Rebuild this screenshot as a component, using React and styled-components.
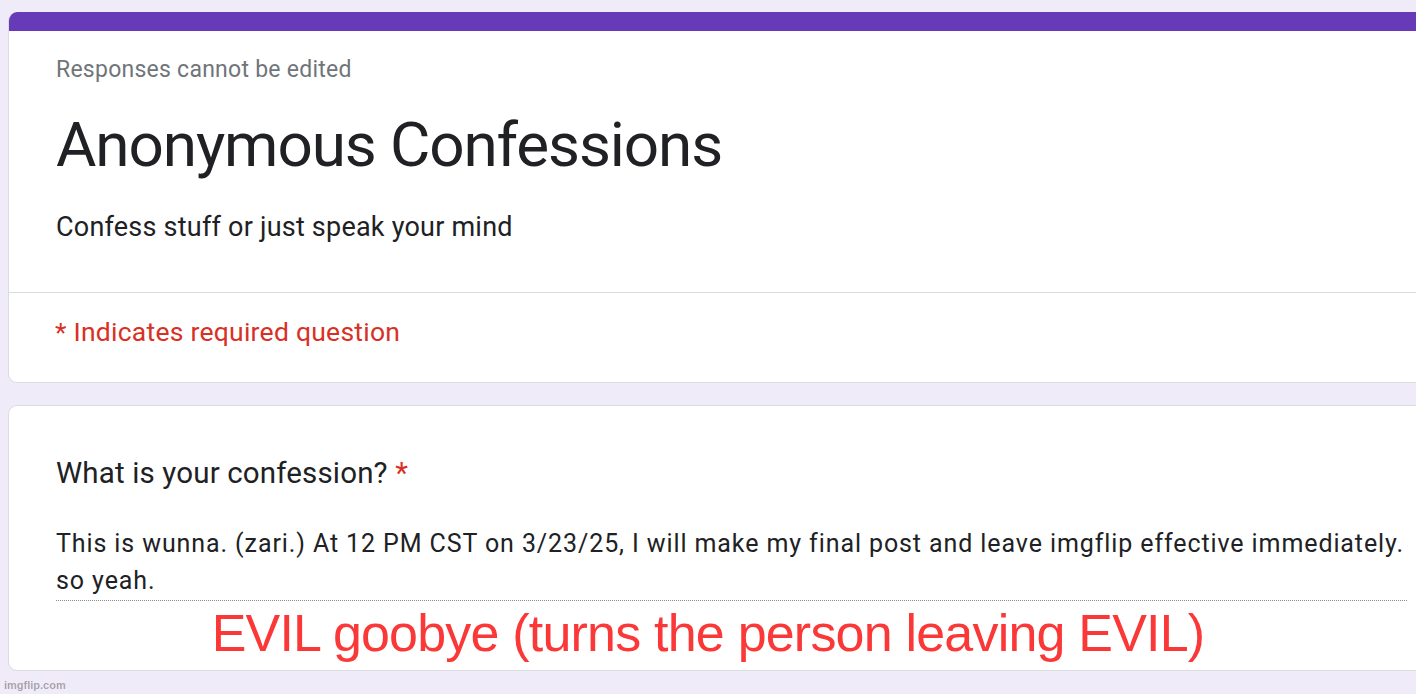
import React from 'react'
import styled, { createGlobalStyle } from 'styled-components'

const GlobalStyle = createGlobalStyle`
  html, body {
    margin: 0;
    padding: 0;
    background: #f0ebf8;
    overflow: hidden;
  }
`;

const Page = styled.div`
  position: relative;
  width: 1416px;
  height: 694px;
  overflow: hidden;
  padding: 12px 0 0 8px;
  box-sizing: border-box;
  display: flex;
  flex-direction: column;
  gap: 22px;
  font-family: Roboto, "Noto Sans", sans-serif;
  color: #202124;
`;

const Card = styled.div`
  width: 1440px;
  background: #fff;
  border: 1px solid #dadce0;
  border-radius: 9px;
  overflow: hidden;
  box-sizing: border-box;
`;

const HeaderCard = styled(Card)`
  border-top: none;
  height: 371px;
`;

const TopBar = styled.div`
  height: 19px;
  background: #673ab7;
`;

const Intro = styled.div`
  padding: 24px 0 0 47px;
  height: 262px;
  box-sizing: border-box;
  border-bottom: 1px solid #dadce0;
`;

const Note = styled.div`
  font-size: 23px;
  line-height: 30px;
  color: #70757a;
  letter-spacing: 0.25px;
`;

const Title = styled.h1`
  margin: 22px 0 0;
  font-size: 62px;
  font-weight: 400;
  line-height: 76px;
  letter-spacing: -1.1px;
`;

const Description = styled.div`
  margin-top: 26px;
  font-size: 27px;
  line-height: 36px;
  letter-spacing: 0.22px;
`;

const Required = styled.div`
  padding: 22px 0 0 46px;
  font-size: 26.5px;
  line-height: 34px;
  color: #d93025;
  letter-spacing: 0.25px;
`;

const QuestionCard = styled(Card)`
  height: 266px;
  padding: 47px 0 0 47px;
`;

const Question = styled.div`
  font-size: 29.5px;
  line-height: 40px;
  letter-spacing: 0.15px;
`;

const Star = styled.span`
  color: #d93025;
`;

const Answer = styled.div`
  margin-top: 32px;
  width: 1351px;
  font-size: 25px;
  line-height: 37px;
  letter-spacing: 0.9px;
  white-space: nowrap;
  padding-bottom: 1px;
  border-bottom: 1px dotted #8a8a8a;
`;

const Caption = styled.div`
  position: absolute;
  left: 0;
  right: 0;
  top: 603px;
  text-align: center;
  font-family: "Liberation Sans", Arial, sans-serif;
  font-size: 52px;
  line-height: 60px;
  letter-spacing: -0.8px;
  color: #fb3838;
`;

const Watermark = styled.div`
  position: absolute;
  left: 4px;
  bottom: 2px;
  font-family: "Liberation Sans", Arial, sans-serif;
  font-size: 11px;
  font-weight: 700;
  line-height: 14px;
  color: rgba(0, 0, 0, 0.33);
`;

const App = () => {
  return (
    <>
      <GlobalStyle />
      <Page>
        <HeaderCard>
          <TopBar />
          <Intro>
            <Note>Responses cannot be edited</Note>
            <Title>Anonymous Confessions</Title>
            <Description>Confess stuff or just speak your mind</Description>
          </Intro>
          <Required>* Indicates required question</Required>
        </HeaderCard>
        <QuestionCard>
          <Question>
            What is your confession? <Star>*</Star>
          </Question>
          <Answer>
            This is wunna. (zari.) At 12 PM CST on 3/23/25, I will make my final post and leave imgflip effective immediately.
            <br />
            so yeah.
          </Answer>
        </QuestionCard>
        <Caption>EVIL goobye (turns the person leaving EVIL)</Caption>
        <Watermark>imgflip.com</Watermark>
      </Page>
    </>
  )
}

export default App
